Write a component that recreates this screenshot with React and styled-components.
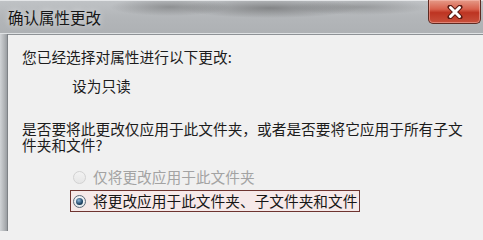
import React from 'react'
import styled, { createGlobalStyle } from 'styled-components'

const GlobalStyle = createGlobalStyle`
  html, body {
    margin: 0;
    padding: 0;
    background: #f0f0f0;
  }
  body {
    font-family: "Noto Sans CJK SC", "Noto Sans", sans-serif;
  }
`

const Window = styled.div`
  width: 483px;
  height: 231px;
  display: flex;
  flex-direction: column;
  overflow: hidden;
  background: #f0f0f0;
`

const TitleBar = styled.div`
  height: 34px;
  flex-shrink: 0;
  display: flex;
  align-items: flex-start;
  border-top: 1px solid #e4e6e8;
  border-bottom: 1px solid #dfe2e4;
  box-sizing: border-box;
  background:
    radial-gradient(ellipse 60px 9px at 170px 6px, rgba(60, 60, 60, 0.35), transparent),
    radial-gradient(ellipse 90px 10px at 270px 7px, rgba(50, 50, 50, 0.4), transparent),
    radial-gradient(ellipse 70px 8px at 360px 6px, rgba(70, 70, 70, 0.3), transparent),
    linear-gradient(#bfc2c5, #b3b6b9 50%, #aeb1b4);
`

const Title = styled.div`
  padding: 6px 0 0 8px;
  font-size: 15.5px;
  line-height: 20px;
  color: #161616;
  text-shadow: 0 0 6px rgba(255, 255, 255, 0.7);
`

const CloseButton = styled.div`
  margin-left: auto;
  margin-right: 2px;
  margin-top: -1px;
  width: 53px;
  height: 24px;
  box-sizing: border-box;
  display: flex;
  align-items: center;
  justify-content: center;
  border: 1px solid #5e2a22;
  border-top: none;
  border-radius: 0 0 5px 5px;
  background: linear-gradient(#e59a88 0%, #d8604c 40%, #bd3422 55%, #c8503c 100%);
  box-shadow: inset 0 0 0 1px rgba(255, 200, 190, 0.45);
`

const Body = styled.div`
  flex: 1;
  display: flex;
`

const LeftFrame = styled.div`
  width: 7px;
  flex-shrink: 0;
  background: linear-gradient(to right, #d0d3d6, #b2b5b8 60%, #9a9ea2);
  border-right: 1px solid #7e8286;
`

const Panel = styled.div`
  flex: 1;
  border-top: 1px solid #8e9296;
  background: #f0f0f0;
  padding: 13px 0 0 14px;
  color: #1c1c1c;
  font-size: 14.7px;
  text-spacing-trim: space-all;
`

const Line = styled.div`
  line-height: ${(p) => p.lh || 18}px;
  margin-top: ${(p) => p.mt || 0}px;
  padding-left: ${(p) => p.indent || 0}px;
  width: ${(p) => p.w || 'auto'};
`

const Options = styled.div`
  margin-top: 14px;
  padding-left: 48px;
  display: flex;
  flex-direction: column;
  align-items: flex-start;
  gap: 2px;
`

const RadioRow = styled.div`
  height: 22px;
  box-sizing: border-box;
  display: flex;
  align-items: center;
  gap: 7px;
  padding: 0 2px 0 2px;
  border: 1px solid ${(p) => (p.focused ? '#6e3430' : 'transparent')};
  background: ${(p) => (p.focused ? '#f6e9e9' : 'transparent')};
  color: ${(p) => (p.disabled ? '#a3a3a3' : '#161616')};
`

const RadioCircle = styled.span`
  width: 13px;
  height: 13px;
  box-sizing: border-box;
  border-radius: 50%;
  display: flex;
  align-items: center;
  justify-content: center;
  border: 1px solid ${(p) => (p.disabled ? '#d2d2d2' : '#5d6a78')};
  background: ${(p) =>
    p.disabled
      ? 'linear-gradient(#f2f2f2, #e6e6e6)'
      : 'radial-gradient(circle at 50% 40%, #ffffff, #d9dee4)'};

  &::after {
    content: '';
    display: ${(p) => (p.checked ? 'block' : 'none')};
    width: 7px;
    height: 7px;
    border-radius: 50%;
    background: radial-gradient(circle at 40% 35%, #8fb6d8, #1f4466 60%, #0d2236);
  }
`

const Label = styled.span`
  line-height: 20px;
`

const CloseIcon = () => (
  <svg width="16" height="14" viewBox="0 0 16 14">
    <path d="M3 2 L13 12 M13 2 L3 12" stroke="#5a1a12" strokeWidth="5" strokeLinecap="round" />
    <path d="M3.5 2.5 L12.5 11.5 M12.5 2.5 L3.5 11.5" stroke="#ffffff" strokeWidth="3" strokeLinecap="round" />
  </svg>
)

const App = () => {
  return (
    <>
      <GlobalStyle />
      <Window>
        <TitleBar>
          <Title>确认属性更改</Title>
          <CloseButton>
            <CloseIcon />
          </CloseButton>
        </TitleBar>
        <Body>
          <LeftFrame />
          <Panel>
            <Line>您已经选择对属性进行以下更改:</Line>
            <Line mt={11} indent={50}>设为只读</Line>
            <Line mt={26} lh={15.5} w="445px">
              是否要将此更改仅应用于此文件夹，或者是否要将它应用于所有子文件夹和文件?
            </Line>
            <Options>
              <RadioRow disabled>
                <RadioCircle disabled />
                <Label>仅将更改应用于此文件夹</Label>
              </RadioRow>
              <RadioRow focused>
                <RadioCircle checked />
                <Label>将更改应用于此文件夹、子文件夹和文件</Label>
              </RadioRow>
            </Options>
          </Panel>
        </Body>
      </Window>
    </>
  )
}

export default App
